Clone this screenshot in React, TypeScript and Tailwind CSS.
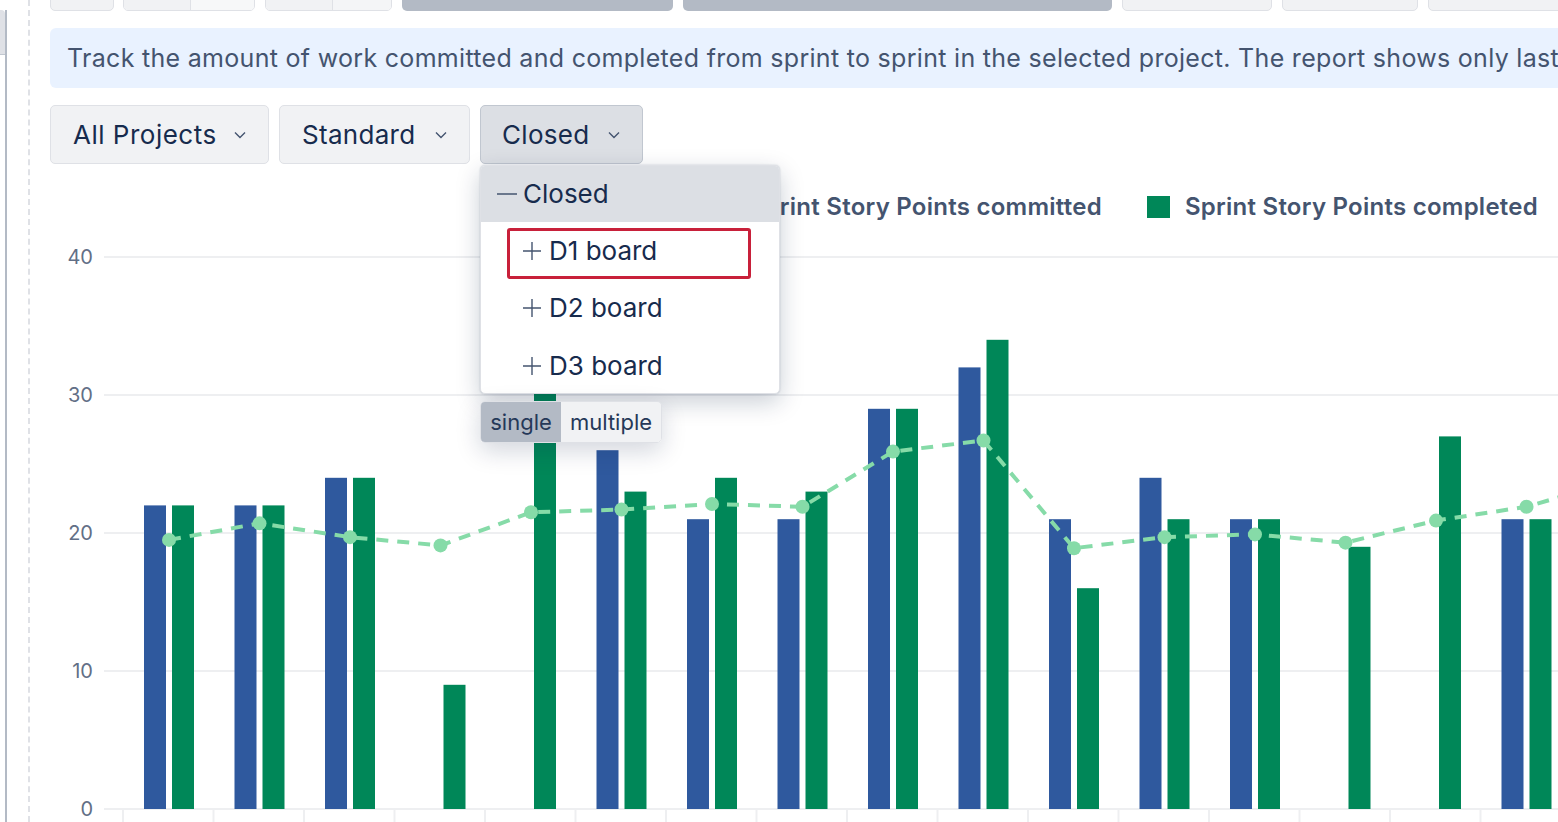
import React from "react";

const blue = [22, 22, 24, 0, 0, 26, 21, 21, 29, 32, 21, 24, 21, 0, 0, 21];
const green = [22, 22, 24, 9, 31, 23, 24, 23, 29, 34, 16, 21, 21, 19, 27, 21];
const line = [19.5, 20.7, 19.7, 19.1, 21.5, 21.7, 22.1, 21.9, 25.9, 26.7, 18.9, 19.7, 19.9, 19.3, 20.9, 21.9, 23.8];

const X0 = 50;
const Y0 = 230;
const yv = (v: number) => 809 - 13.8 * v - Y0;
const cx = (k: number) => 169 + 90.5 * k - X0;

function Chevron() {
  return (
    <svg width="12" height="8" viewBox="0 0 12 8" className="shrink-0">
      <path d="M1 1.5 L6 6.5 L11 1.5" fill="none" stroke="#44546f" strokeWidth="1.4" />
    </svg>
  );
}

function Plus() {
  return (
    <svg width="18" height="18" viewBox="0 0 18 18" className="shrink-0">
      <path d="M9 0 V18 M0 9 H18" stroke="#44546f" strokeWidth="1.4" />
    </svg>
  );
}

function Minus() {
  return (
    <svg width="20" height="18" viewBox="0 0 20 18" className="shrink-0">
      <path d="M0 9 H20" stroke="#44546f" strokeWidth="1.4" />
    </svg>
  );
}

function Chart() {
  const pts = line.map((v, i) => `${cx(i)},${yv(v)}`).join(" ");
  return (
    <svg width="1508" height="592" viewBox="0 0 1508 592" className="block">
      {[0, 10, 20, 30, 40].map((v) => (
        <g key={v}>
          <line x1="54" x2="1508" y1={yv(v)} y2={yv(v)} stroke="#eeeff1" strokeWidth="2" />
          <text
            x="43"
            y={yv(v)}
            textAnchor="end"
            dominantBaseline="central"
            fontSize="20"
            fill="#626f86"
            fontFamily="Inter, 'Noto Sans', sans-serif"
          >
            {v}
          </text>
        </g>
      ))}
      {Array.from({ length: 17 }).map((_, k) => (
        <line key={k} x1={73 + 90.5 * k} x2={73 + 90.5 * k} y1={579} y2={592} stroke="#eeeff1" strokeWidth="2" />
      ))}
      {blue.map((v, k) =>
        v > 0 ? <rect key={"b" + k} x={cx(k) - 25} y={yv(v)} width="22" height={579 - yv(v)} fill="#2f599e" /> : null
      )}
      {green.map((v, k) =>
        v > 0 ? <rect key={"g" + k} x={cx(k) + 3} y={yv(v)} width="22" height={579 - yv(v)} fill="#008758" /> : null
      )}
      <polyline points={pts} fill="none" stroke="#86dba8" strokeWidth="4" strokeDasharray="12 9" />
      {line.map((v, i) => (
        <circle key={i} cx={cx(i)} cy={yv(v)} r="7" fill="#86dba8" />
      ))}
    </svg>
  );
}

export default function App() {
  return (
    <div
      className="w-[1558px] h-[822px] overflow-hidden bg-white flex relative"
      style={{ fontFamily: "Inter, 'Noto Sans', sans-serif" }}
    >
      {/* left rail */}
      <div className="w-[7px] shrink-0 pt-[10px] h-full">
        <div className="h-full border-r-2 border-[#b3bac5]">
          <div className="h-[45px] bg-[#dfe1e6] rounded-tr-[4px] border-b border-[#c1c7d0]" />
        </div>
      </div>
      <div className="w-[21px] shrink-0" />
      <div className="w-0 h-full border-l-2 border-dashed border-[#dfe1e6] shrink-0" />
      <div className="w-[20px] shrink-0" />

      {/* content */}
      <div className="w-[1508px] shrink-0 flex flex-col">
        {/* top buttons (cut off) */}
        <div className="flex mt-[-29px] h-[40px]">
          <div className="w-[64px] h-full rounded-[5px] border border-[#dfe1e6] bg-[#f1f2f4] shrink-0" />
          <div className="w-[132px] ml-[9px] h-full rounded-[5px] border border-[#dfe1e6] flex overflow-hidden shrink-0">
            <div className="w-[67px] bg-[#f1f2f4] border-r border-[#dfe1e6]" />
            <div className="flex-1 bg-[#f7f8f9]" />
          </div>
          <div className="w-[127px] ml-[10px] h-full rounded-[5px] border border-[#dfe1e6] flex overflow-hidden shrink-0">
            <div className="w-[67px] bg-[#f1f2f4] border-r border-[#dfe1e6]" />
            <div className="flex-1 bg-[#f4f5f7]" />
          </div>
          <div className="w-[271px] ml-[10px] h-full rounded-[5px] bg-[#b3bac5] shrink-0" />
          <div className="w-[429px] ml-[10px] h-full rounded-[5px] bg-[#b3bac5] shrink-0" />
          <div className="w-[150px] ml-[10px] h-full rounded-[5px] border border-[#dfe1e6] bg-[#f1f2f4] shrink-0" />
          <div className="w-[136px] ml-[10px] h-full rounded-[5px] border border-[#dfe1e6] bg-[#f1f2f4] shrink-0" />
          <div className="w-[200px] ml-[10px] h-full rounded-[5px] border border-[#dfe1e6] bg-[#f1f2f4] shrink-0" />
        </div>

        {/* info banner */}
        <div className="mt-[17px] w-[1600px] h-[60px] rounded-[6px] bg-[#e9f2ff] flex items-center pl-[17px] shrink-0">
          <span className="text-[25px] tracking-[0.3px] text-[#44546f] whitespace-nowrap leading-none">
            Track the amount of work committed and completed from sprint to sprint in the selected project. The report shows only last
          </span>
        </div>

        {/* filters */}
        <div className="mt-[17px] flex gap-[10px] h-[59px] relative z-10">
          <div className="w-[219px] h-full rounded-[5px] border border-[#dfe1e6] bg-[#f1f2f4] flex items-center justify-between pl-[22px] pr-[22px]">
            <span className="text-[26px] tracking-[0.5px] text-[#172b4d] leading-none">All Projects</span>
            <Chevron />
          </div>
          <div className="w-[191px] h-full rounded-[5px] border border-[#dfe1e6] bg-[#f1f2f4] flex items-center justify-between pl-[22px] pr-[22px]">
            <span className="text-[26px] tracking-[0.3px] text-[#172b4d] leading-none">Standard</span>
            <Chevron />
          </div>
          <div className="relative">
            <div className="w-[163px] h-[59px] rounded-[5px] border border-[#c1c7d0] bg-[#dcdfe4] flex items-center justify-between pl-[21px] pr-[22px]">
              <span className="text-[26px] tracking-[0.3px] text-[#172b4d] leading-none">Closed</span>
              <Chevron />
            </div>
            <div className="absolute left-0 top-[60px] flex flex-col gap-[7px]">
              <div className="w-[300px] h-[229px] bg-white rounded-[5px] border border-[#dfe1e6] shadow-[0_8px_24px_rgba(9,30,66,0.22),0_0_2px_rgba(9,30,66,0.2)] overflow-hidden flex flex-col">
                <div className="h-[56px] shrink-0 bg-[#dcdfe4] flex items-center pl-[16px] gap-[6px]">
                  <Minus />
                  <span className="text-[26px] text-[#172b4d] leading-none">Closed</span>
                </div>
                <div className="h-[57px] shrink-0 flex items-center pl-[42px] gap-[8px] relative">
                  <Plus />
                  <span className="text-[26px] text-[#172b4d] leading-none">D1 board</span>
                  <div className="absolute left-[26px] top-[6px] w-[244px] h-[51px] border-[3px] border-[#c8203a] rounded-[3px]" />
                </div>
                <div className="h-[58px] shrink-0 flex items-center pl-[42px] gap-[8px]">
                  <Plus />
                  <span className="text-[26px] text-[#172b4d] leading-none">D2 board</span>
                </div>
                <div className="h-[58px] shrink-0 flex items-center pl-[42px] gap-[8px]">
                  <Plus />
                  <span className="text-[26px] text-[#172b4d] leading-none">D3 board</span>
                </div>
              </div>
              <div className="w-[182px] h-[42px] rounded-[5px] border border-[#dfe1e6] flex overflow-hidden shadow-[0_8px_24px_rgba(9,30,66,0.18)]">
                <div className="w-[80px] bg-[#b3bac5] flex items-center justify-center text-[22px] text-[#253858] leading-none">
                  single
                </div>
                <div className="flex-1 bg-[#f1f2f4] flex items-center justify-center text-[22px] text-[#253858] leading-none">
                  multiple
                </div>
              </div>
            </div>
          </div>
        </div>

        {/* legend */}
        <div className="mt-[32px] h-[22px] flex justify-end items-center gap-[45px] pr-[20px]">
          <div className="flex items-center gap-[15px]">
            <div className="w-[23px] h-[22px] bg-[#2f599e]" />
            <span className="text-[24px] tracking-[0.25px] font-semibold text-[#44546f] leading-none whitespace-nowrap">
              Sprint Story Points committed
            </span>
          </div>
          <div className="flex items-center gap-[15px]">
            <div className="w-[23px] h-[22px] bg-[#008758]" />
            <span className="text-[24px] tracking-[0.25px] font-semibold text-[#44546f] leading-none whitespace-nowrap">
              Sprint Story Points completed
            </span>
          </div>
        </div>

        <div className="mt-[12px]">
          <Chart />
        </div>
      </div>
    </div>
  );
}
